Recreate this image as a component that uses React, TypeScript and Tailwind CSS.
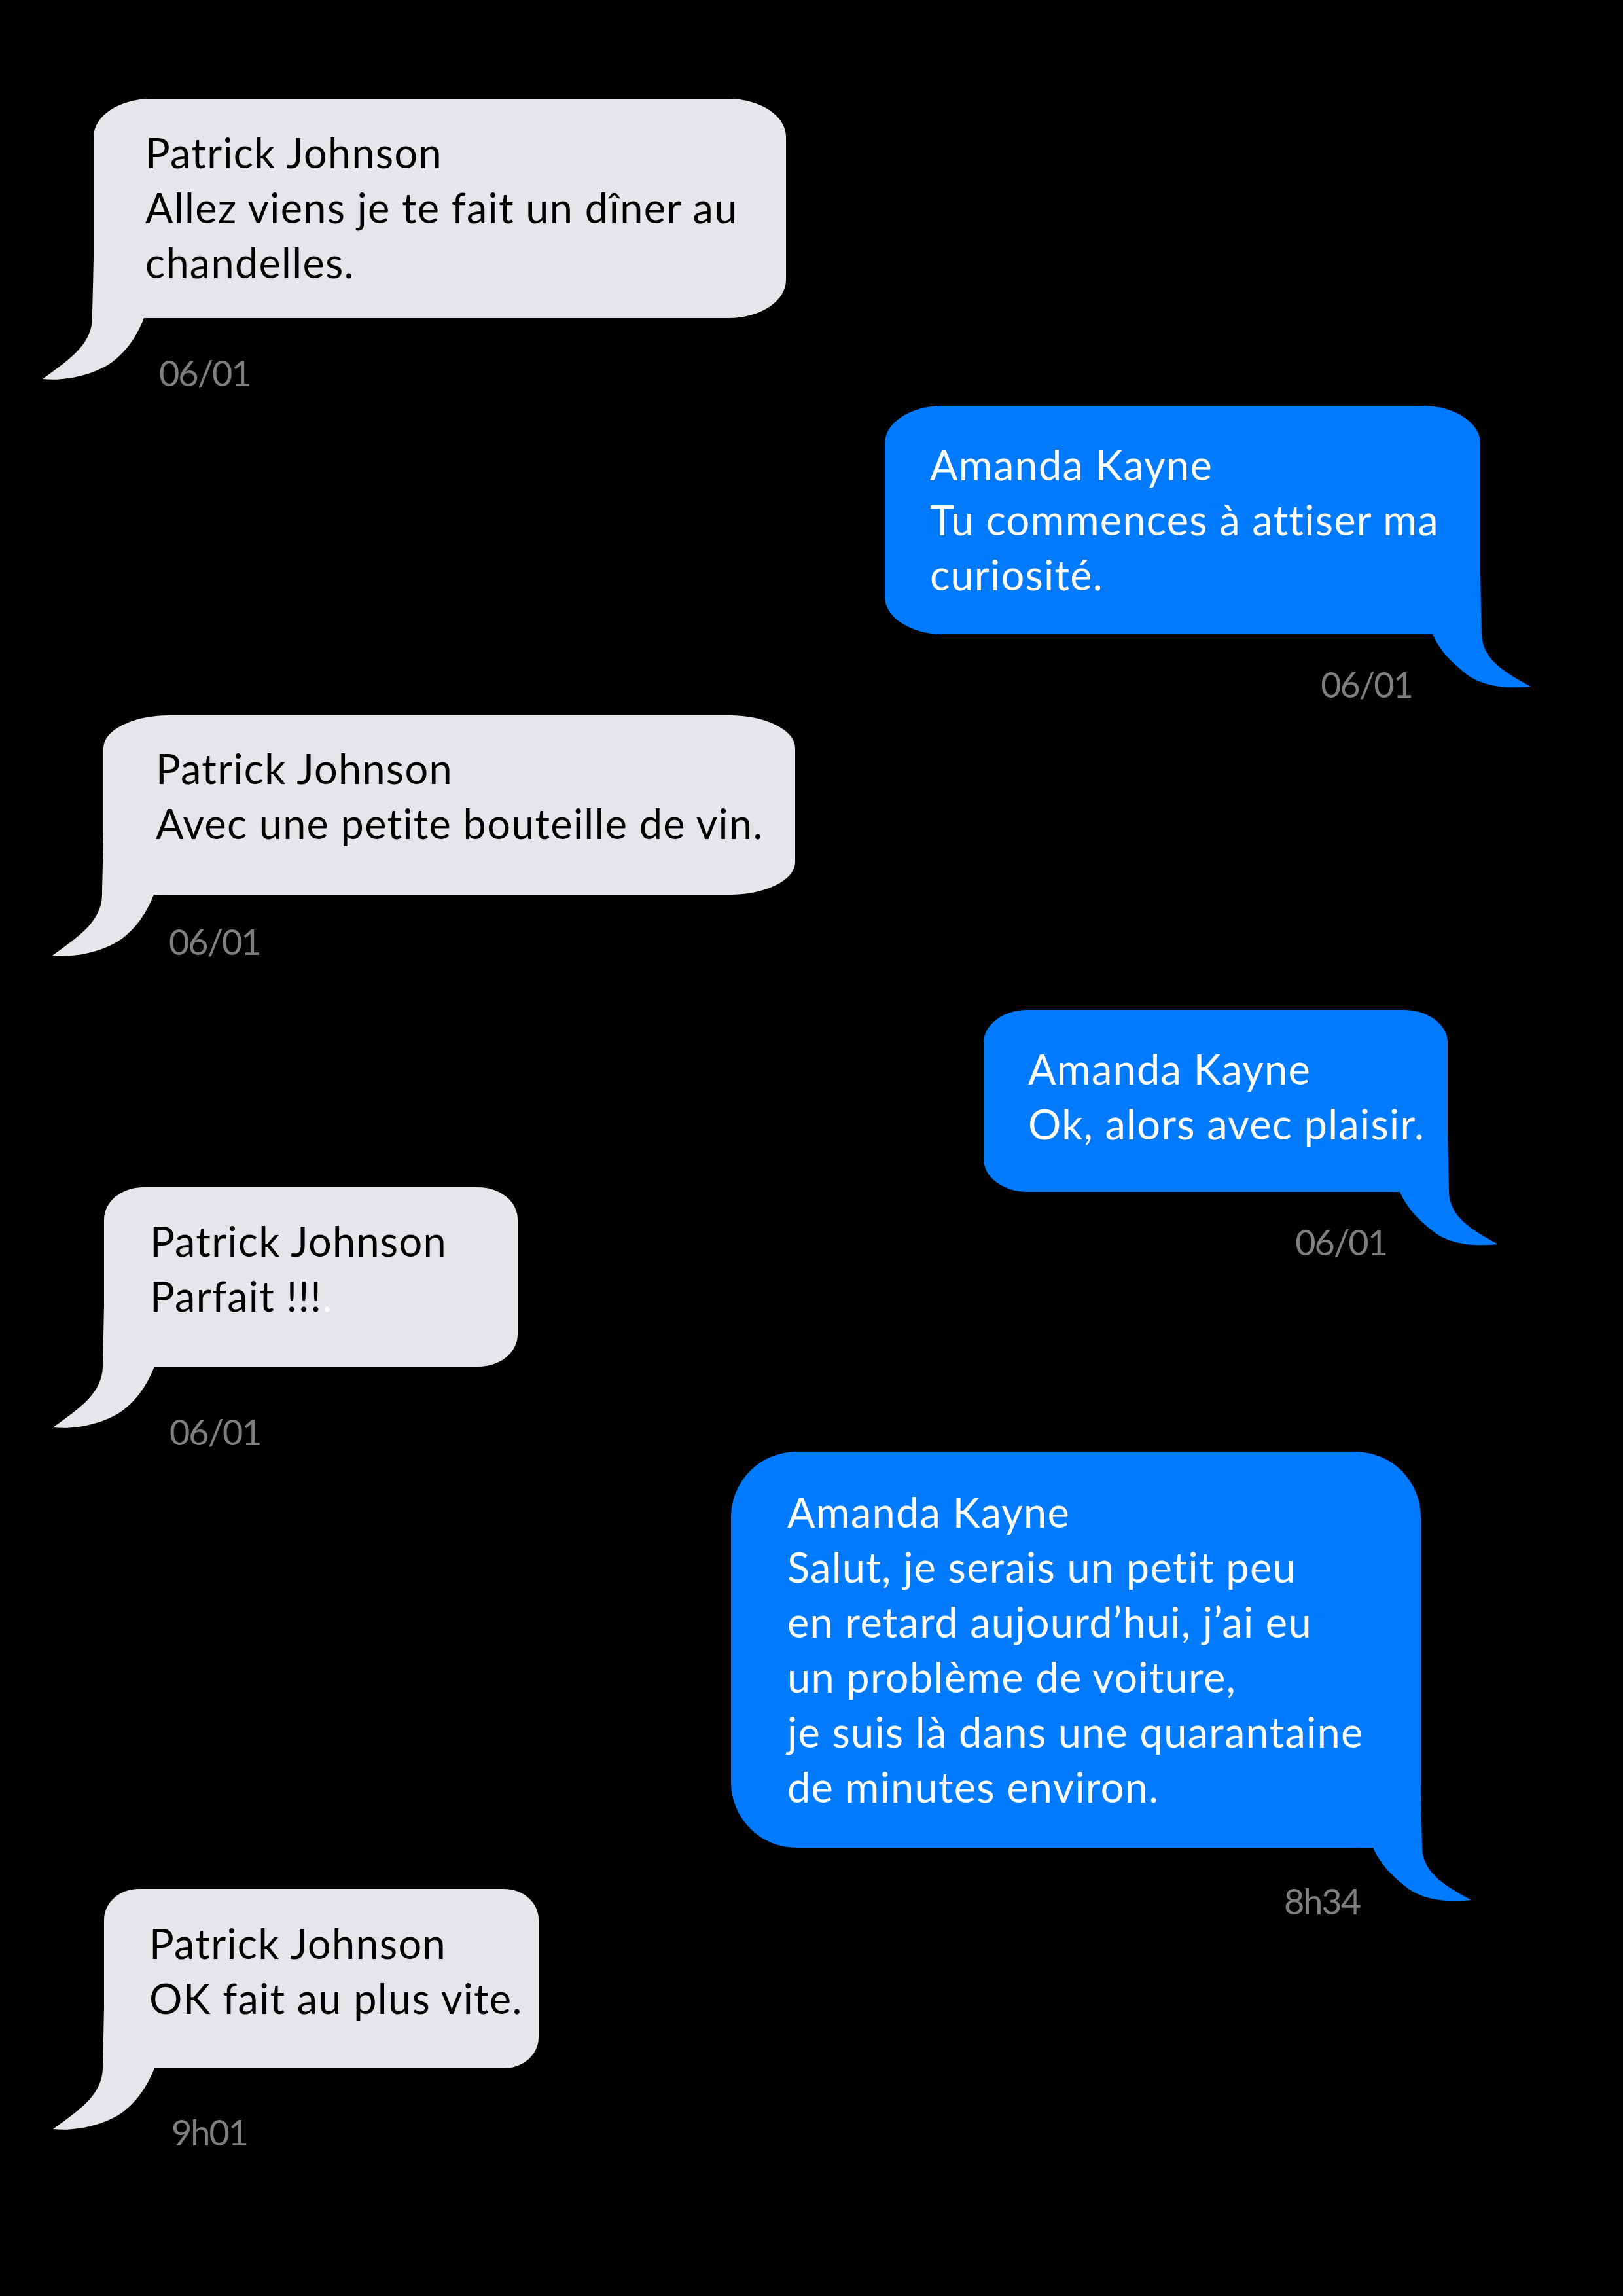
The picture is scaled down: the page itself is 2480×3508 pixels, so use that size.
const GrayTail = () => (
    <svg
        className="absolute left-[-80px] bottom-[-96px] w-[180px] h-[196px]"
        viewBox="-80 -100 180 196"
    >
        <path
            fill="#e6e5ea"
            d="M0 -100 L0 -95 C-1 -40 -2 -10 -2 0 C-3 40 -35 62 -78 93 C-40 97 5 85 30 66 C50 50 65 30 77 0 L95 0 L95 -100 Z"
        />
    </svg>
);

const BlueTail = () => (
    <svg
        className="absolute right-[-80px] bottom-[-86px] w-[180px] h-[186px]"
        viewBox="-100 -100 180 186"
    >
        <path
            fill="#007aff"
            d="M0 -100 L0 -95 C1 -40 2 -10 2 0 C3 35 30 55 77 80 C40 84 0 80 -25 58 C-45 42 -62 25 -73 0 L-95 0 L-95 -100 Z"
        />
    </svg>
);

type Msg = {
    side: "left" | "right";
    wrap: string;
    bubble: string;
    stamp: string;
    time: string;
    name: string;
    lines: React.ReactNode[];
};

const messages: Msg[] = [
    {
        side: "left",
        wrap: "mt-[151px] ml-[143px]",
        bubble: "w-[1058px] h-[335px] pl-[79px] pt-[40px] rounded-[88px_/_58px]",
        stamp: "mt-[56px] ml-[100px]",
        time: "06/01",
        name: "Patrick Johnson",
        lines: ["Allez viens je te fait un dîner au", "chandelles."],
    },
    {
        side: "right",
        wrap: "mt-[22px] mr-[218px]",
        bubble: "w-[910px] h-[349px] pl-[69px] pt-[48px] rounded-[89px_/_57px]",
        stamp: "mt-[49px] mr-[104px]",
        time: "06/01",
        name: "Amanda Kayne",
        lines: ["Tu commences à attiser ma", "curiosité."],
    },
    {
        side: "left",
        wrap: "mt-[19px] ml-[158px]",
        bubble: "w-[1057px] h-[274px] pl-[80px] pt-[39px] rounded-[100px_/_50px]",
        stamp: "mt-[44px] ml-[100px]",
        time: "06/01",
        name: "Patrick Johnson",
        lines: ["Avec une petite bouteille de vin."],
    },
    {
        side: "right",
        wrap: "mt-[76px] mr-[268px]",
        bubble: "w-[709px] h-[278px] pl-[68px] pt-[48px] rounded-[67px_/_50px]",
        stamp: "mt-[49px] mr-[93px]",
        time: "06/01",
        name: "Amanda Kayne",
        lines: ["Ok, alors avec plaisir."],
    },
    {
        side: "left",
        wrap: "mt-[-112px] ml-[159px]",
        bubble: "w-[632px] h-[274px] pl-[70px] pt-[40px] rounded-[60px_/_49px]",
        stamp: "mt-[72px] ml-[100px]",
        time: "06/01",
        name: "Patrick Johnson",
        lines: [<>Parfait !!!<span className="text-white">.</span></>],
    },
    {
        side: "right",
        wrap: "mt-[2px] mr-[309px]",
        bubble: "w-[1054px] h-[605px] pl-[86px] pt-[50px] rounded-[100px]",
        stamp: "mt-[54px] mr-[93px]",
        time: "8h34",
        name: "Amanda Kayne",
        lines: [
            "Salut, je serais un petit peu",
            "en retard aujourd\u2019hui, j\u2019ai eu",
            "un problème de voiture,",
            "je suis là dans une quarantaine",
            "de minutes environ.",
        ],
    },
    {
        side: "left",
        wrap: "mt-[-47px] ml-[159px]",
        bubble: "w-[664px] h-[274px] pl-[69px] pt-[41px] rounded-[53px_/_47px]",
        stamp: "mt-[70px] ml-[103px]",
        time: "9h01",
        name: "Patrick Johnson",
        lines: ["OK fait au plus vite."],
    },
];

const Message = ({m}: { m: Msg }) => {
    const left = m.side === "left";
    return (
        <div className={`flex flex-col ${left ? "self-start items-start" : "self-end items-end"} ${m.wrap}`}>
            <div
                className={`relative shrink-0 ${m.bubble} ${left ? "bg-[#e6e5ea] text-black" : "bg-[#007aff] text-white"}`}
            >
                {left ? <GrayTail/> : <BlueTail/>}
                <div className="relative text-[63px] leading-[84px] tracking-[1.3px] whitespace-nowrap">
                    <div>{m.name}</div>
                    {m.lines.map((l, i) => (
                        <div key={i}>{l}</div>
                    ))}
                </div>
            </div>
            <div className={`text-[54px] leading-[56px] tracking-[-2px] text-[#7f7f7f] ${m.stamp}`}>{m.time}</div>
        </div>
    );
};

export default function App() {
    return (
        <div className="w-[2480px] h-[3508px] bg-black flex flex-col overflow-hidden font-['Lato',sans-serif] [font-variant-ligatures:none]">
            {messages.map((m, i) => (
                <Message key={i} m={m}/>
            ))}
        </div>
    );
}
